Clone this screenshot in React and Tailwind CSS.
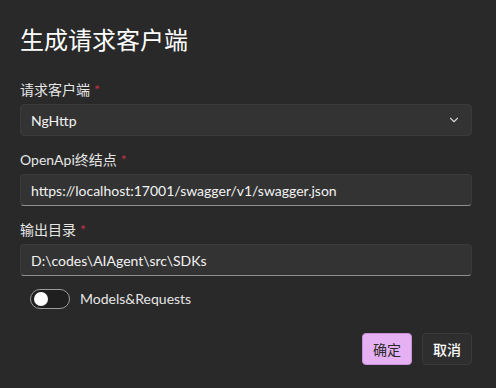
import { ChevronDown } from "lucide-react";

const font = { fontFamily: 'Lato, "Noto Sans CJK SC", sans-serif' };

function Label({ children }) {
  return (
    <div className="h-5 text-[14px] leading-5 text-[#e6e6e6]">
      {children}
      <span className="ml-1 text-[#c4314b]">*</span>
    </div>
  );
}

function TextInput({ value }) {
  return (
    <div className="h-8 flex items-center rounded-[4px] border border-[#3a3a3a] border-b-[#8f8f8f] bg-[#333333] px-[10px] text-[14px] text-[#f2f2f2]">
      {value}
    </div>
  );
}

export default function App() {
  return (
    <div className="w-[496px] h-[388px] bg-[#292929] pl-5 pr-6 pt-6" style={font}>
      <h1 className="text-[24px] leading-8 font-normal text-white">生成请求客户端</h1>

      <div className="mt-6 flex flex-col gap-[14px]">
        <div className="flex flex-col gap-1">
          <Label>请求客户端</Label>
          <div className="h-8 flex items-center justify-between rounded-[4px] border border-[#3a3a3a] bg-[#333333] pl-[10px] pr-[10px] text-[14px] text-[#f2f2f2]">
            <span>NgHttp</span>
            <ChevronDown size={14} strokeWidth={2} className="text-[#d0d0d0]" />
          </div>
        </div>

        <div className="flex flex-col gap-1">
          <Label>OpenApi终结点</Label>
          <TextInput value="https://localhost:17001/swagger/v1/swagger.json" />
        </div>

        <div className="flex flex-col gap-1">
          <Label>输出目录</Label>
          <TextInput value="D:\codes\AIAgent\src\SDKs" />
        </div>
      </div>

      <div className="mt-3 ml-[10px] flex items-center gap-[10px]">
        <div className="w-10 h-5 rounded-full border border-[#9c9c9c] bg-[#1f1f1f] flex items-center px-[3px]">
          <div className="w-[14px] h-[14px] rounded-full bg-white" />
        </div>
        <span className="text-[14px] text-[#e6e6e6]">Models&amp;Requests</span>
      </div>

      <div className="mt-6 flex justify-end gap-[10px]">
        <button className="w-[50px] h-8 rounded-[4px] border border-[#c98fd8] bg-[#e6b1f3] text-[14px] text-[#2a2a2a]">
          确定
        </button>
        <button className="w-[50px] h-8 rounded-[4px] border border-[#3a3a3a] bg-[#2e2e2e] text-[14px] font-medium text-white">
          取消
        </button>
      </div>
    </div>
  );
}
